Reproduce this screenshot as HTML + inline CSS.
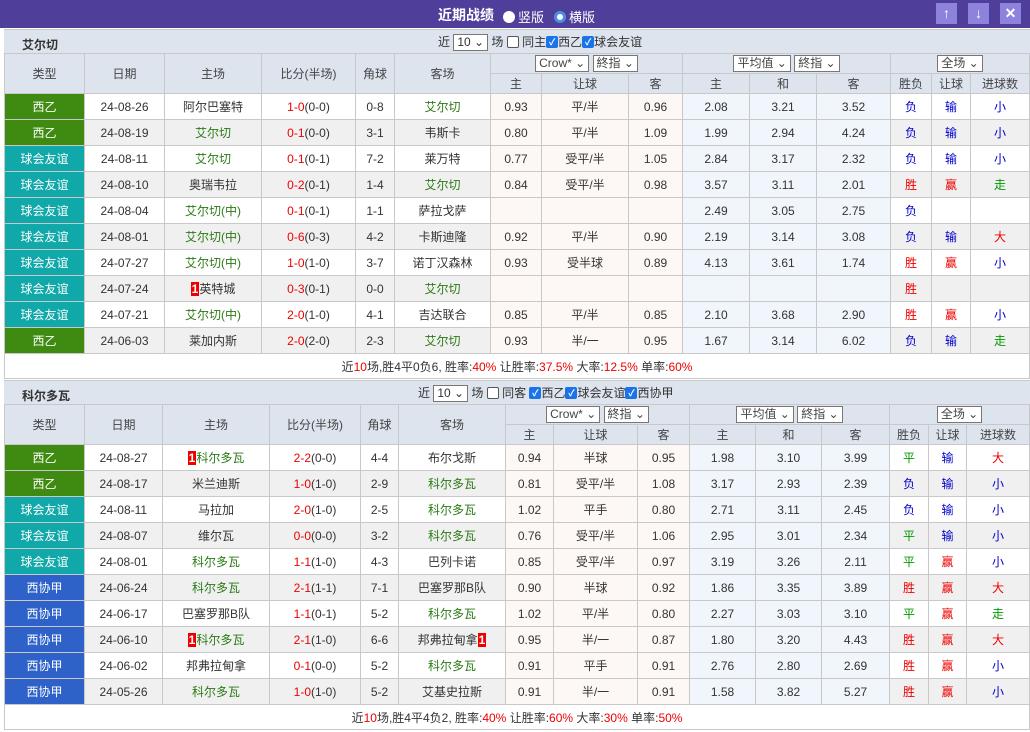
<!DOCTYPE html>
<html><head><meta charset="utf-8">
<style>
*{margin:0;padding:0;box-sizing:border-box}
body{width:1030px;height:732px;background:#fff;font-family:"Liberation Sans","Noto Sans CJK SC",sans-serif;font-size:12px;color:#333;position:relative;overflow:hidden}
.bar{position:absolute;left:0;top:0;width:1030px;height:28px;background:#4f3f9b;color:#fff}
.bar .t{position:absolute;left:438px;top:5px;font-size:14px;font-weight:bold}
.bar .r{position:absolute;top:7px;font-size:13px}
.rad{display:inline-block;width:12px;height:12px;border-radius:50%;background:#fff;vertical-align:-1px;margin-right:3px}
.rad.on{background:#fff;border:3px solid #4a8fe0;box-shadow:inset 0 0 0 2px #fff}
.btn{position:absolute;top:3px;width:21px;height:21px;background:#8d82dc;color:#fff;text-align:center;font-size:14px;line-height:21px;font-weight:bold}
.th{position:absolute;left:4px;width:1026px;height:24px;background:#dde4ee;border-top:1px solid #c8c8c8}
.th .n{position:absolute;left:18px;top:6px;font-weight:bold;font-size:12px}
.th .f{position:absolute;top:4px;font-size:12px;line-height:16px}
.cb{display:inline-block;width:12px;height:12px;border:1px solid #555;border-radius:2px;vertical-align:middle;background:#fff;overflow:hidden;position:relative;top:-1px}
.cb.on{background:#1a73e8;border-color:#1a73e8;color:#fff;font-size:9px;line-height:10px;text-align:center;font-weight:bold}
.sel{display:inline-block;border:1px solid #777;background:#fff;height:17px;line-height:15px;padding:0 3px;font-size:12px;vertical-align:middle}
table{position:absolute;left:4px;border-collapse:collapse;table-layout:fixed;width:1026px}
td{border:1px solid #c8c8c8;text-align:center;height:26px;padding:0;white-space:nowrap;overflow:hidden}
tr.h td{background:#dde4ee;height:20px;color:#444;line-height:16px}
tr.g td{background:#f0f0f0}
td.p{background:#fdf8f5!important}
td.b{background:#f0f6fb!important}
td.l{color:#fff!important}
.xy{background:#3f8a10!important}.yy{background:#10a8a8!important}.xj{background:#2f62c9!important}
.gr{color:#2a7a14}.rd{color:#e00}.bl{color:#00c}.gn{color:#090}
.rc{background:#e00;color:#fff;font-weight:bold;padding:0 1px}
.sum{text-align:center;height:25px;background:#fff}
</style></head><body>
<div class="bar"><span class="t">近期战绩</span>
<span class="r" style="left:503px"><span class="rad"></span>竖版</span>
<span class="r" style="left:554px"><span class="rad on"></span>横版</span>
<div class="btn" style="left:936px">↑</div><div class="btn" style="left:968px">↓</div><div class="btn" style="left:1000px">✕</div>
</div>

<div class="th" style="top:29px"><span class="n">艾尔切</span>
<span class="f" style="left:434px">近 <span class="sel">10 ⌄</span> 场 <span class="cb"></span> 同主<span class="cb on">✓</span>西乙<span class="cb on">✓</span>球会友谊</span></div>
<table style="top:53px">
<colgroup><col style="width:80px"><col style="width:80px"><col style="width:97px"><col style="width:94px"><col style="width:39px"><col style="width:96px"><col style="width:51px"><col style="width:87px"><col style="width:54px"><col style="width:67px"><col style="width:67px"><col style="width:74px"><col style="width:41px"><col style="width:39px"><col style="width:59px"></colgroup>
<tr class="h"><td rowspan="2">类型</td><td rowspan="2">日期</td><td rowspan="2">主场</td><td rowspan="2">比分(半场)</td><td rowspan="2">角球</td><td rowspan="2">客场</td><td colspan="3"><span class="sel">Crow* ⌄</span> <span class="sel">終指 ⌄</span></td><td colspan="3"><span class="sel">平均值 ⌄</span> <span class="sel">終指 ⌄</span></td><td colspan="3"><span class="sel">全场 ⌄</span></td></tr>
<tr class="h"><td>主</td><td>让球</td><td>客</td><td>主</td><td>和</td><td>客</td><td>胜负</td><td>让球</td><td>进球数</td></tr>
<tr><td class="l xy">西乙</td><td>24-08-26</td><td>阿尔巴塞特</td><td><span class="rd">1-0</span>(0-0)</td><td>0-8</td><td class="gr">艾尔切</td><td class="p">0.93</td><td class="p">平/半</td><td class="p">0.96</td><td class="b">2.08</td><td class="b">3.21</td><td class="b">3.52</td><td class="bl">负</td><td class="bl">输</td><td class="bl">小</td></tr>
<tr class="g"><td class="l xy">西乙</td><td>24-08-19</td><td class="gr">艾尔切</td><td><span class="rd">0-1</span>(0-0)</td><td>3-1</td><td>韦斯卡</td><td class="p">0.80</td><td class="p">平/半</td><td class="p">1.09</td><td class="b">1.99</td><td class="b">2.94</td><td class="b">4.24</td><td class="bl">负</td><td class="bl">输</td><td class="bl">小</td></tr>
<tr><td class="l yy">球会友谊</td><td>24-08-11</td><td class="gr">艾尔切</td><td><span class="rd">0-1</span>(0-1)</td><td>7-2</td><td>莱万特</td><td class="p">0.77</td><td class="p">受平/半</td><td class="p">1.05</td><td class="b">2.84</td><td class="b">3.17</td><td class="b">2.32</td><td class="bl">负</td><td class="bl">输</td><td class="bl">小</td></tr>
<tr class="g"><td class="l yy">球会友谊</td><td>24-08-10</td><td>奥瑞韦拉</td><td><span class="rd">0-2</span>(0-1)</td><td>1-4</td><td class="gr">艾尔切</td><td class="p">0.84</td><td class="p">受平/半</td><td class="p">0.98</td><td class="b">3.57</td><td class="b">3.11</td><td class="b">2.01</td><td class="rd">胜</td><td class="rd">赢</td><td class="gn">走</td></tr>
<tr><td class="l yy">球会友谊</td><td>24-08-04</td><td class="gr">艾尔切(中)</td><td><span class="rd">0-1</span>(0-1)</td><td>1-1</td><td>萨拉戈萨</td><td class="p"></td><td class="p"></td><td class="p"></td><td class="b">2.49</td><td class="b">3.05</td><td class="b">2.75</td><td class="bl">负</td><td></td><td></td></tr>
<tr class="g"><td class="l yy">球会友谊</td><td>24-08-01</td><td class="gr">艾尔切(中)</td><td><span class="rd">0-6</span>(0-3)</td><td>4-2</td><td>卡斯迪隆</td><td class="p">0.92</td><td class="p">平/半</td><td class="p">0.90</td><td class="b">2.19</td><td class="b">3.14</td><td class="b">3.08</td><td class="bl">负</td><td class="bl">输</td><td class="rd">大</td></tr>
<tr><td class="l yy">球会友谊</td><td>24-07-27</td><td class="gr">艾尔切(中)</td><td><span class="rd">1-0</span>(1-0)</td><td>3-7</td><td>诺丁汉森林</td><td class="p">0.93</td><td class="p">受半球</td><td class="p">0.89</td><td class="b">4.13</td><td class="b">3.61</td><td class="b">1.74</td><td class="rd">胜</td><td class="rd">赢</td><td class="bl">小</td></tr>
<tr class="g"><td class="l yy">球会友谊</td><td>24-07-24</td><td><span class="rc">1</span>英特城</td><td><span class="rd">0-3</span>(0-1)</td><td>0-0</td><td class="gr">艾尔切</td><td class="p"></td><td class="p"></td><td class="p"></td><td class="b"></td><td class="b"></td><td class="b"></td><td class="rd">胜</td><td></td><td></td></tr>
<tr><td class="l yy">球会友谊</td><td>24-07-21</td><td class="gr">艾尔切(中)</td><td><span class="rd">2-0</span>(1-0)</td><td>4-1</td><td>吉达联合</td><td class="p">0.85</td><td class="p">平/半</td><td class="p">0.85</td><td class="b">2.10</td><td class="b">3.68</td><td class="b">2.90</td><td class="rd">胜</td><td class="rd">赢</td><td class="bl">小</td></tr>
<tr class="g"><td class="l xy">西乙</td><td>24-06-03</td><td>莱加内斯</td><td><span class="rd">2-0</span>(2-0)</td><td>2-3</td><td class="gr">艾尔切</td><td class="p">0.93</td><td class="p">半/一</td><td class="p">0.95</td><td class="b">1.67</td><td class="b">3.14</td><td class="b">6.02</td><td class="bl">负</td><td class="bl">输</td><td class="gn">走</td></tr>
<tr><td colspan="15" class="sum">近<span class="rd">10</span>场,胜4平0负6, 胜率:<span class="rd">40%</span> 让胜率:<span class="rd">37.5%</span> 大率:<span class="rd">12.5%</span> 单率:<span class="rd">60%</span></td></tr>
</table>

<div class="th" style="top:380px"><span class="n">科尔多瓦</span>
<span class="f" style="left:414px">近 <span class="sel">10 ⌄</span> 场 <span class="cb"></span> 同客 <span class="cb on">✓</span>西乙<span class="cb on">✓</span>球会友谊<span class="cb on">✓</span>西协甲</span></div>
<table style="top:404px">
<colgroup><col style="width:80px"><col style="width:78px"><col style="width:107px"><col style="width:91px"><col style="width:38px"><col style="width:107px"><col style="width:48px"><col style="width:84px"><col style="width:52px"><col style="width:66px"><col style="width:66px"><col style="width:68px"><col style="width:39px"><col style="width:38px"><col style="width:63px"></colgroup>
<tr class="h"><td rowspan="2">类型</td><td rowspan="2">日期</td><td rowspan="2">主场</td><td rowspan="2">比分(半场)</td><td rowspan="2">角球</td><td rowspan="2">客场</td><td colspan="3"><span class="sel">Crow* ⌄</span> <span class="sel">終指 ⌄</span></td><td colspan="3"><span class="sel">平均值 ⌄</span> <span class="sel">終指 ⌄</span></td><td colspan="3"><span class="sel">全场 ⌄</span></td></tr>
<tr class="h"><td>主</td><td>让球</td><td>客</td><td>主</td><td>和</td><td>客</td><td>胜负</td><td>让球</td><td>进球数</td></tr>
<tr><td class="l xy">西乙</td><td>24-08-27</td><td class="gr"><span class="rc">1</span>科尔多瓦</td><td><span class="rd">2-2</span>(0-0)</td><td>4-4</td><td>布尔戈斯</td><td class="p">0.94</td><td class="p">半球</td><td class="p">0.95</td><td class="b">1.98</td><td class="b">3.10</td><td class="b">3.99</td><td class="gn">平</td><td class="bl">输</td><td class="rd">大</td></tr>
<tr class="g"><td class="l xy">西乙</td><td>24-08-17</td><td>米兰迪斯</td><td><span class="rd">1-0</span>(1-0)</td><td>2-9</td><td class="gr">科尔多瓦</td><td class="p">0.81</td><td class="p">受平/半</td><td class="p">1.08</td><td class="b">3.17</td><td class="b">2.93</td><td class="b">2.39</td><td class="bl">负</td><td class="bl">输</td><td class="bl">小</td></tr>
<tr><td class="l yy">球会友谊</td><td>24-08-11</td><td>马拉加</td><td><span class="rd">2-0</span>(1-0)</td><td>2-5</td><td class="gr">科尔多瓦</td><td class="p">1.02</td><td class="p">平手</td><td class="p">0.80</td><td class="b">2.71</td><td class="b">3.11</td><td class="b">2.45</td><td class="bl">负</td><td class="bl">输</td><td class="bl">小</td></tr>
<tr class="g"><td class="l yy">球会友谊</td><td>24-08-07</td><td>维尔瓦</td><td><span class="rd">0-0</span>(0-0)</td><td>3-2</td><td class="gr">科尔多瓦</td><td class="p">0.76</td><td class="p">受平/半</td><td class="p">1.06</td><td class="b">2.95</td><td class="b">3.01</td><td class="b">2.34</td><td class="gn">平</td><td class="bl">输</td><td class="bl">小</td></tr>
<tr><td class="l yy">球会友谊</td><td>24-08-01</td><td class="gr">科尔多瓦</td><td><span class="rd">1-1</span>(1-0)</td><td>4-3</td><td>巴列卡诺</td><td class="p">0.85</td><td class="p">受平/半</td><td class="p">0.97</td><td class="b">3.19</td><td class="b">3.26</td><td class="b">2.11</td><td class="gn">平</td><td class="rd">赢</td><td class="bl">小</td></tr>
<tr class="g"><td class="l xj">西协甲</td><td>24-06-24</td><td class="gr">科尔多瓦</td><td><span class="rd">2-1</span>(1-1)</td><td>7-1</td><td>巴塞罗那B队</td><td class="p">0.90</td><td class="p">半球</td><td class="p">0.92</td><td class="b">1.86</td><td class="b">3.35</td><td class="b">3.89</td><td class="rd">胜</td><td class="rd">赢</td><td class="rd">大</td></tr>
<tr><td class="l xj">西协甲</td><td>24-06-17</td><td>巴塞罗那B队</td><td><span class="rd">1-1</span>(0-1)</td><td>5-2</td><td class="gr">科尔多瓦</td><td class="p">1.02</td><td class="p">平/半</td><td class="p">0.80</td><td class="b">2.27</td><td class="b">3.03</td><td class="b">3.10</td><td class="gn">平</td><td class="rd">赢</td><td class="gn">走</td></tr>
<tr class="g"><td class="l xj">西协甲</td><td>24-06-10</td><td class="gr"><span class="rc">1</span>科尔多瓦</td><td><span class="rd">2-1</span>(1-0)</td><td>6-6</td><td>邦弗拉甸拿<span class="rc">1</span></td><td class="p">0.95</td><td class="p">半/一</td><td class="p">0.87</td><td class="b">1.80</td><td class="b">3.20</td><td class="b">4.43</td><td class="rd">胜</td><td class="rd">赢</td><td class="rd">大</td></tr>
<tr><td class="l xj">西协甲</td><td>24-06-02</td><td>邦弗拉甸拿</td><td><span class="rd">0-1</span>(0-0)</td><td>5-2</td><td class="gr">科尔多瓦</td><td class="p">0.91</td><td class="p">平手</td><td class="p">0.91</td><td class="b">2.76</td><td class="b">2.80</td><td class="b">2.69</td><td class="rd">胜</td><td class="rd">赢</td><td class="bl">小</td></tr>
<tr class="g"><td class="l xj">西协甲</td><td>24-05-26</td><td class="gr">科尔多瓦</td><td><span class="rd">1-0</span>(1-0)</td><td>5-2</td><td>艾基史拉斯</td><td class="p">0.91</td><td class="p">半/一</td><td class="p">0.91</td><td class="b">1.58</td><td class="b">3.82</td><td class="b">5.27</td><td class="rd">胜</td><td class="rd">赢</td><td class="bl">小</td></tr>
<tr><td colspan="15" class="sum">近<span class="rd">10</span>场,胜4平4负2, 胜率:<span class="rd">40%</span> 让胜率:<span class="rd">60%</span> 大率:<span class="rd">30%</span> 单率:<span class="rd">50%</span></td></tr>
</table>
</body></html>
